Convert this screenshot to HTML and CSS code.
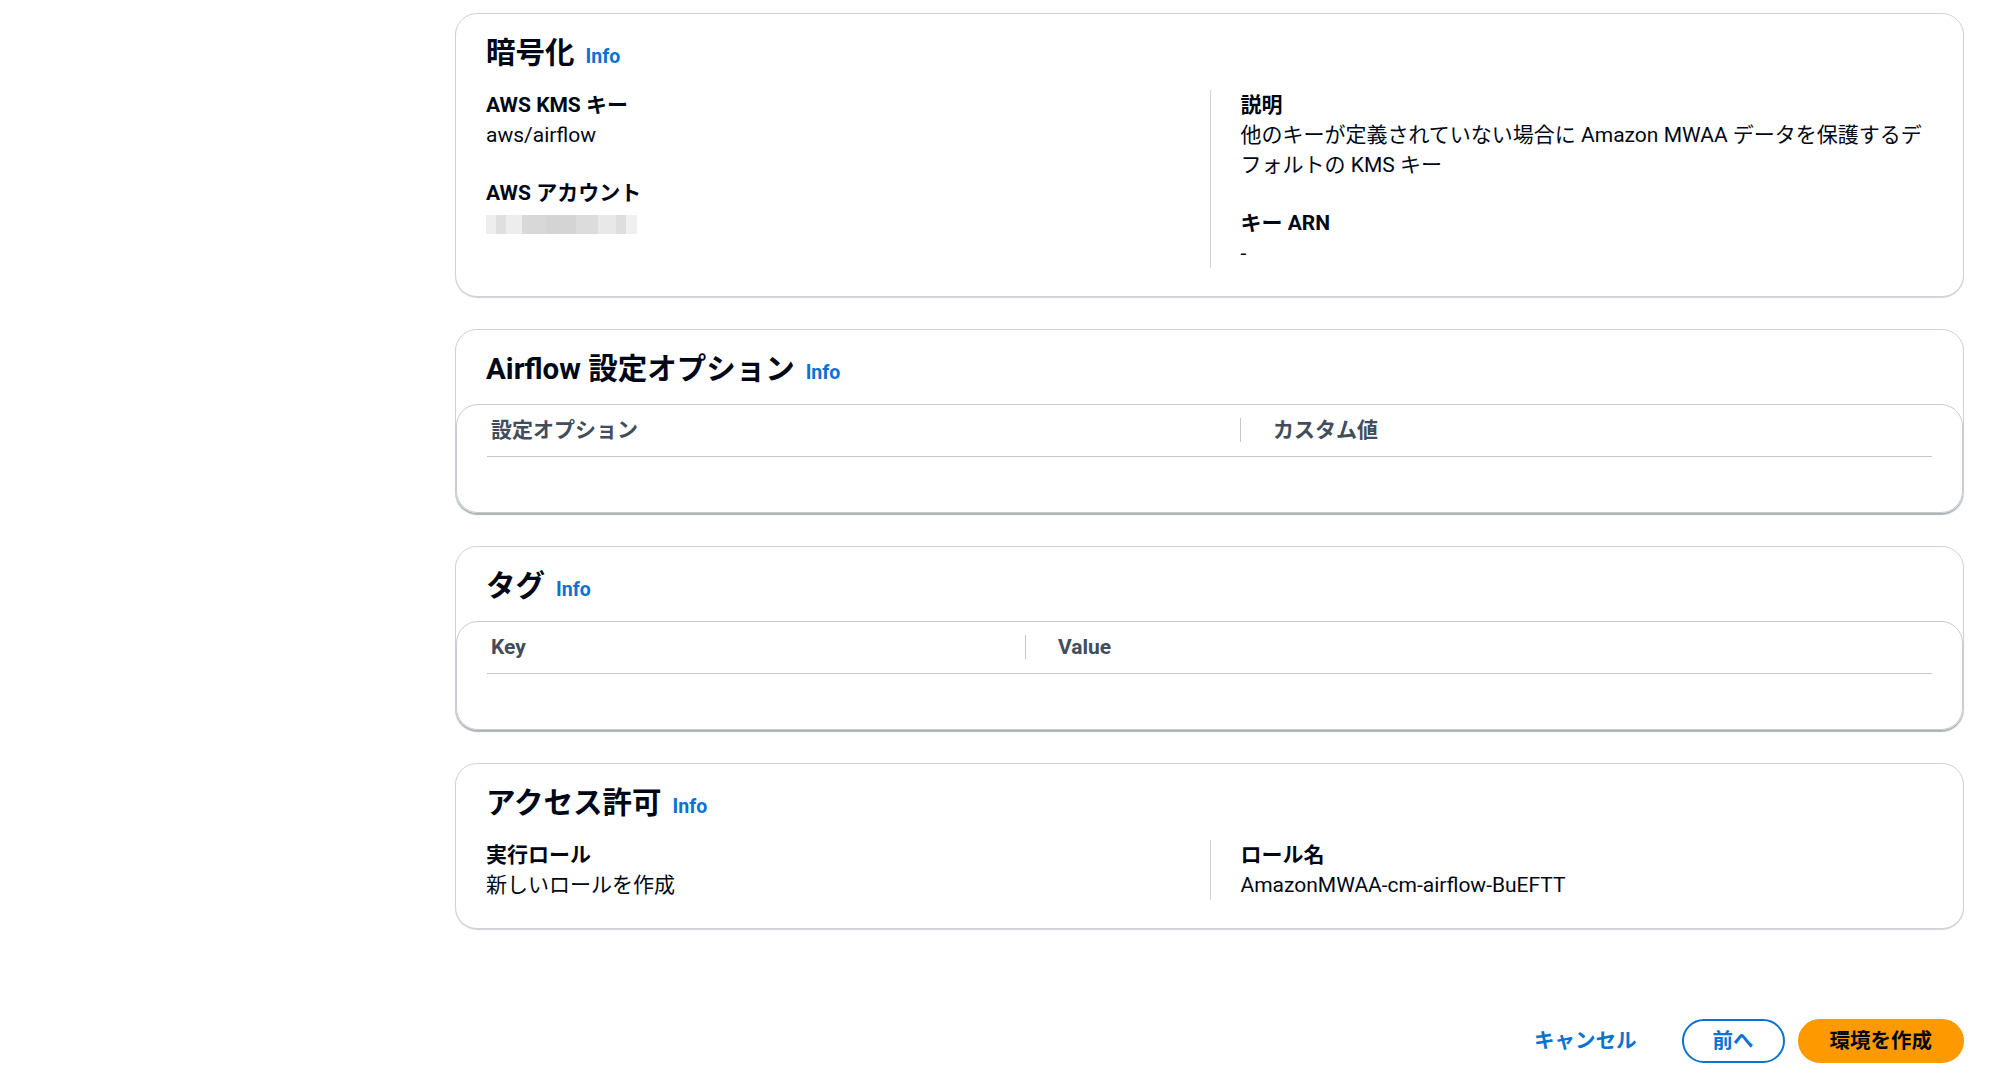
FILE: index.html
```html
<!DOCTYPE html>
<html lang="ja">
<head>
<meta charset="utf-8">
<title>環境を作成</title>
<link rel="stylesheet" href="styles.css">
</head>
<body>
<main class="page">
  <section class="card">
    <header class="card-header">
      <h2 class="card-title">暗号化</h2>
      <a class="info">Info</a>
    </header>
    <div class="card-body columns">
      <div class="col">
        <div class="kv">
          <div class="k">AWS KMS キー</div>
          <div class="v">aws/airflow</div>
        </div>
        <div class="kv">
          <div class="k">AWS アカウント</div>
          <div class="v"><span class="blur"></span></div>
        </div>
      </div>
      <div class="col col-divided">
        <div class="kv">
          <div class="k">説明</div>
          <div class="v">他のキーが定義されていない場合に Amazon MWAA データを保護するデフォルトの KMS キー</div>
        </div>
        <div class="kv">
          <div class="k">キー ARN</div>
          <div class="v">-</div>
        </div>
      </div>
    </div>
  </section>

  <section class="card">
    <header class="card-header">
      <h2 class="card-title">Airflow 設定オプション</h2>
      <a class="info">Info</a>
    </header>
    <div class="table-box">
      <div class="thead">
        <div class="th th-first th-opt">設定オプション</div>
        <div class="th th-next">カスタム値</div>
      </div>
      <div class="tbody"></div>
    </div>
  </section>

  <section class="card">
    <header class="card-header">
      <h2 class="card-title">タグ</h2>
      <a class="info">Info</a>
    </header>
    <div class="table-box">
      <div class="thead">
        <div class="th th-first th-key">Key</div>
        <div class="th th-next">Value</div>
      </div>
      <div class="tbody"></div>
    </div>
  </section>

  <section class="card">
    <header class="card-header">
      <h2 class="card-title">アクセス許可</h2>
      <a class="info">Info</a>
    </header>
    <div class="card-body columns">
      <div class="col">
        <div class="kv">
          <div class="k">実行ロール</div>
          <div class="v">新しいロールを作成</div>
        </div>
      </div>
      <div class="col col-divided">
        <div class="kv">
          <div class="k">ロール名</div>
          <div class="v">AmazonMWAA-cm-airflow-BuEFTT</div>
        </div>
      </div>
    </div>
  </section>

  <div class="actions">
    <button class="btn btn-link">キャンセル</button>
    <button class="btn btn-normal">前へ</button>
    <button class="btn btn-primary">環境を作成</button>
  </div>
</main>
</body>
</html>
```

FILE: styles.css
```css
* { box-sizing: border-box; }

html, body {
  margin: 0;
  padding: 0;
  background: #ffffff;
}

body {
  font-family: Roboto, "Noto Sans CJK JP", sans-serif;
  font-size: 21px;
  line-height: 30px;
  color: #000716;
}

.page {
  width: 1509px;
  margin-left: 455px;
  padding-top: 13px;
  display: flex;
  flex-direction: column;
  gap: 32px;
}

.card {
  border: 1px solid #d1d3d8;
  border-radius: 22px;
  background: #fff;
  box-shadow: 0 1px 1px rgba(0, 28, 36, 0.18);
}

.card-header {
  display: flex;
  align-items: baseline;
  gap: 11px;
  padding: 22px 30px 16px 30px;
}

.card-title {
  margin: 0;
  font-size: 29.5px;
  line-height: 35px;
  font-weight: 700;
  color: #000716;
}

.info {
  font-size: 19.5px;
  font-weight: 700;
  color: #0972d3;
  cursor: pointer;
}

.card-body {
  padding: 2px 30px 28px 30px;
}

.columns {
  display: grid;
  grid-template-columns: 1fr 1fr;
}

.col {
  display: flex;
  flex-direction: column;
  gap: 28px;
}

.col-divided {
  border-left: 1px solid #d1d3d8;
  padding-left: 30px;
}

.k {
  font-weight: 700;
}

.blur {
  display: inline-block;
  vertical-align: middle;
  width: 151px;
  height: 19px;
  background:
    linear-gradient(90deg,
      #ececec 0, #ececec 10px,
      #dcdcdc 10px, #dcdcdc 20px,
      #ebebeb 20px, #ebebeb 36px,
      #d4d4d4 36px, #d4d4d4 60px,
      #cfcfcf 60px, #cfcfcf 90px,
      #d8d8d8 90px, #d8d8d8 112px,
      #e6e6e6 112px, #e6e6e6 130px,
      #dadada 130px, #dadada 140px,
      #eeeeee 140px, #eeeeee 151px);
  opacity: 0.9;
}

.table-box {
  border: 1px solid #c9cbd1;
  border-radius: 22px;
  padding: 0 30px;
  box-shadow: 0 2px 1px rgba(0, 28, 36, 0.18);
}

.thead {
  display: flex;
  border-bottom: 1px solid #c6c6cd;
}

.th {
  padding: 11px 0 11px 4px;
  font-weight: 700;
  color: #414d5c;
  line-height: 29px;
}

.th-first {
  position: relative;
}

.th-first::after {
  content: "";
  position: absolute;
  right: 0;
  top: 13px;
  height: 24px;
  border-right: 1px solid #c6c6cd;
}

.th-opt { width: 754px; }
.th-key { width: 539px; }

.th-next {
  padding-left: 32px;
}

.tbody {
  height: 55px;
}

.actions {
  display: flex;
  justify-content: flex-end;
  gap: 13px;
  margin-top: 58px;
}

.btn {
  font-family: Roboto, "Noto Sans CJK JP", sans-serif;
  font-size: 20.5px;
  font-weight: 700;
  line-height: 40px;
  padding: 0 30px;
  border: 2px solid transparent;
  border-radius: 22px;
  background: transparent;
  cursor: pointer;
}

.btn-link {
  color: #0972d3;
}

.btn-normal {
  color: #0972d3;
  border-color: #0972d3;
  background: #fff;
  padding: 0 29px;
}

.btn-primary {
  color: #000716;
  background: #ff9900;
  border-color: #ff9900;
  padding: 0 30px;
}
```
